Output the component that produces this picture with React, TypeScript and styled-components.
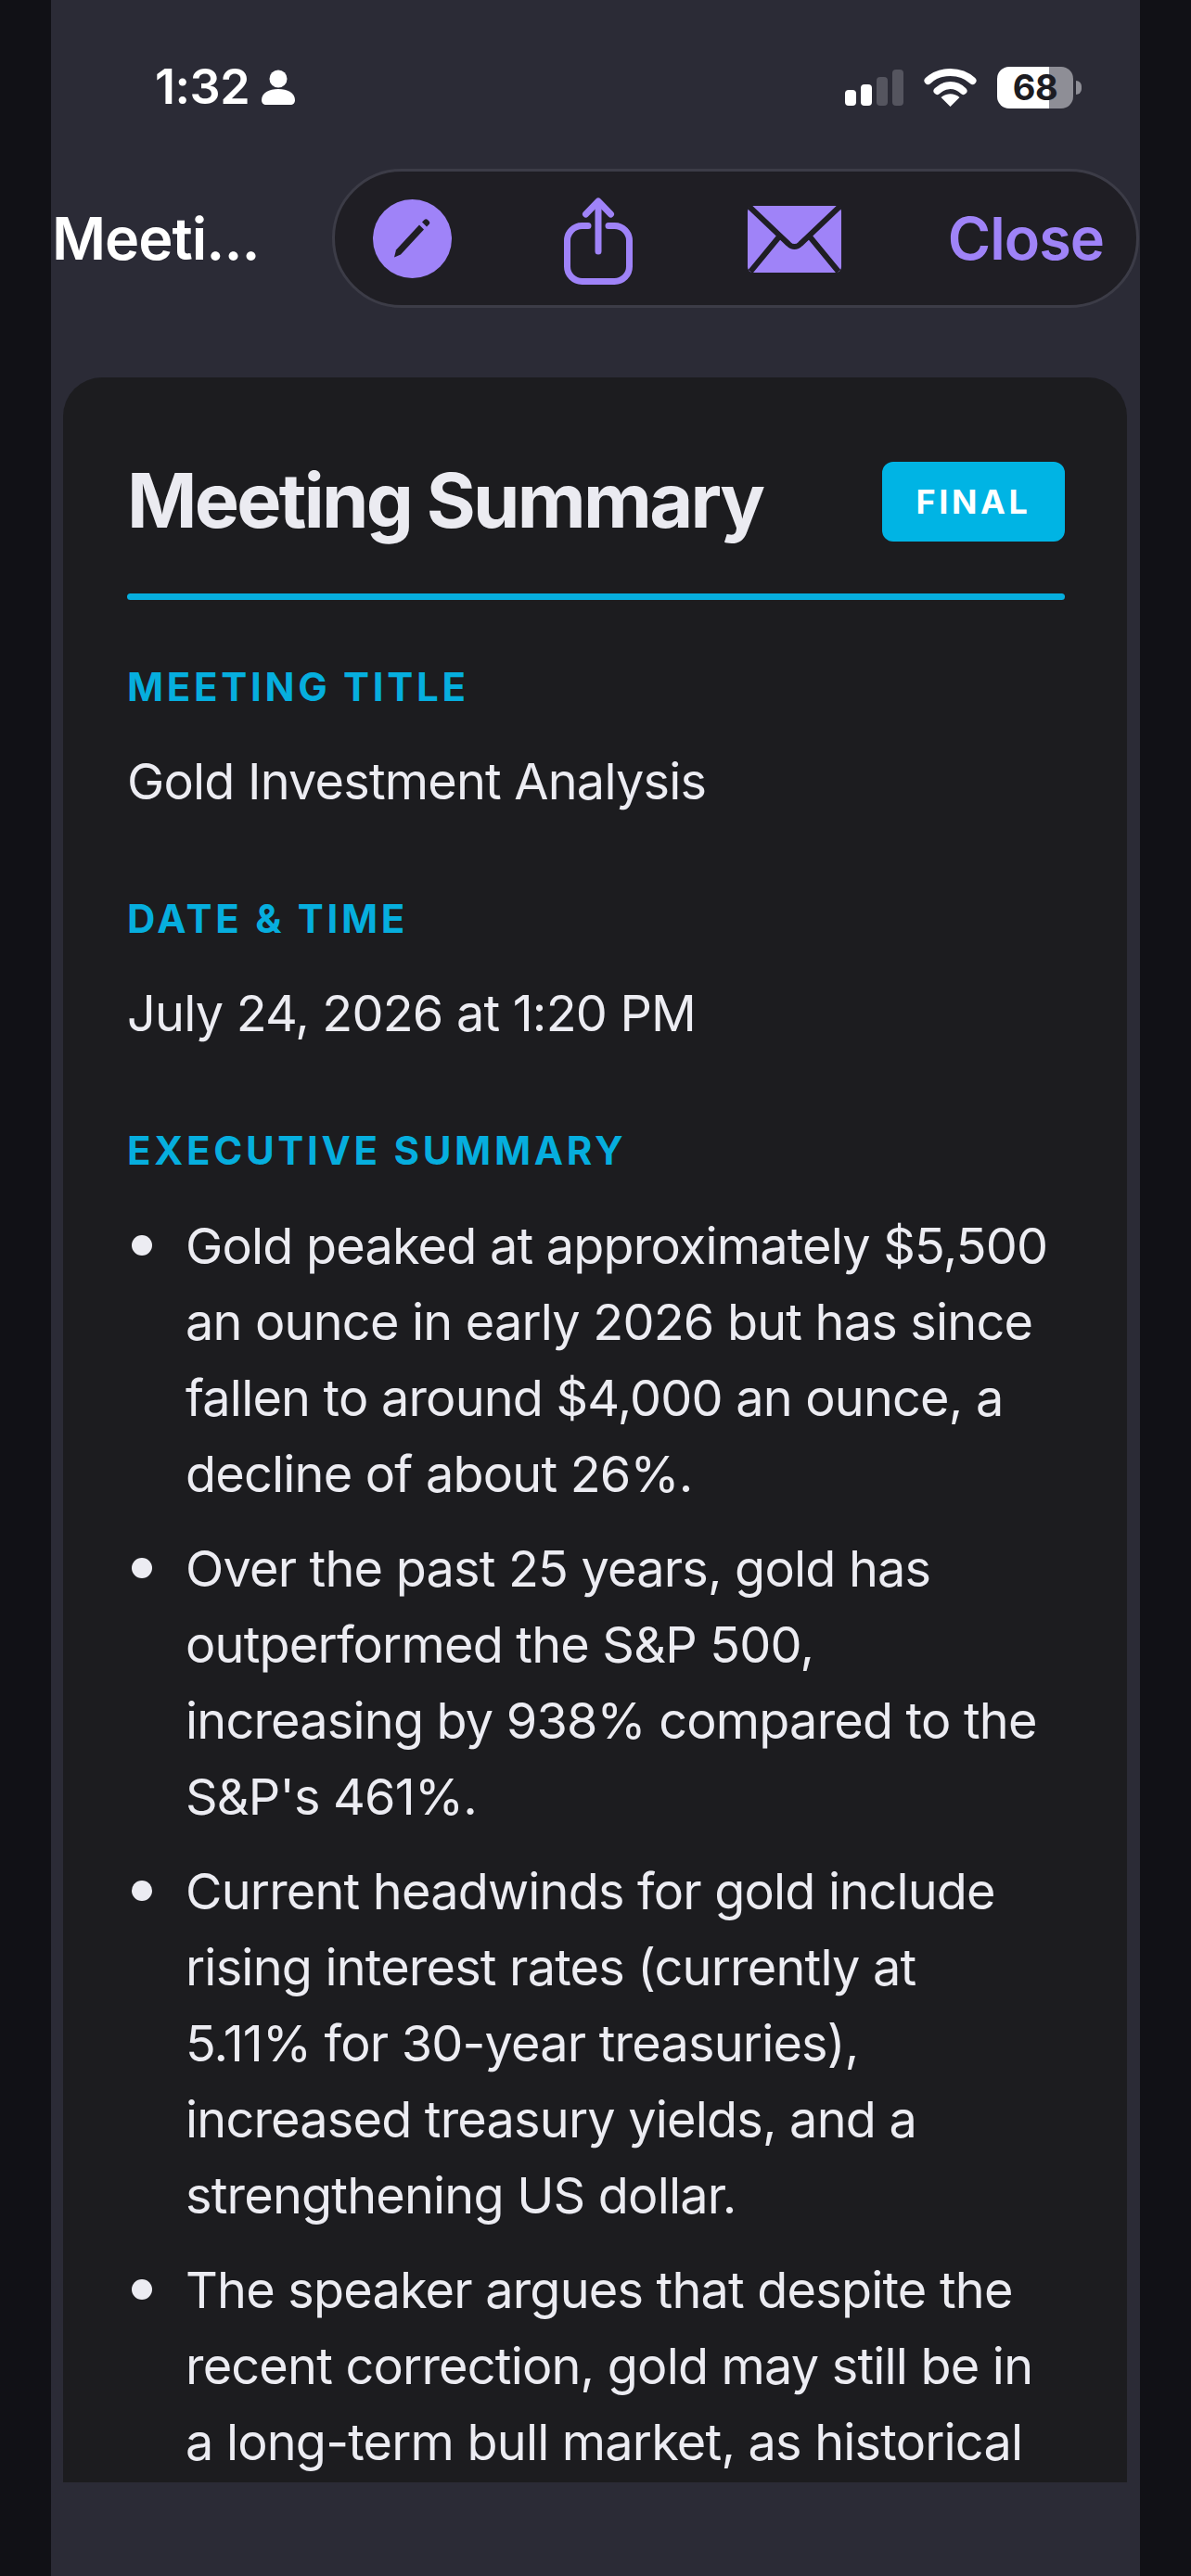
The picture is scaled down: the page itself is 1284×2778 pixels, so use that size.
import React from "react";
import styled, { createGlobalStyle } from "styled-components";

const GlobalStyle = createGlobalStyle`
  html, body {
    margin: 0;
    padding: 0;
    background: #111116;
    font-family: "Inter", "Liberation Sans", sans-serif;
  }
  * {
    box-sizing: border-box;
  }
`;

const purple = "#9f83f8";
const cyan = "#06aede";

const bullets = [
  "Gold peaked at approximately $5,500 an ounce in early 2026 but has since fallen to around $4,000 an ounce, a decline of about 26%.",
  "Over the past 25 years, gold has outperformed the S&P 500, increasing by 938% compared to the S&P's 461%.",
  "Current headwinds for gold include rising interest rates (currently at 5.11% for 30-year treasuries), increased treasury yields, and a strengthening US dollar.",
  "The speaker argues that despite the recent correction, gold may still be in a long-term bull market, as historical",
];

function App() {
  return (
    <>
      <GlobalStyle />
      <Page>
        <Phone>
          <StatusBar>
            <StatusLeft>
              <Time>1:32</Time>
              <svg width="36" height="38" viewBox="0 0 36 38" fill="#fff">
                <circle cx="18" cy="10" r="9.5" />
                <path d="M0 33c0-8 8-12 18-12s18 4 18 12c0 3-2 5-5 5H5c-3 0-5-2-5-5z" />
              </svg>
            </StatusLeft>
            <StatusRight>
              <Signal>
                <SignalBar $height={17} $on />
                <SignalBar $height={23} $on />
                <SignalBar $height={31} />
                <SignalBar $height={39} />
              </Signal>
              <svg width="57" height="42" viewBox="0 0 56 42">
                <path d="M4 14C17 2 39 2 52 14" fill="none" stroke="#fff" strokeWidth="8" strokeLinecap="round" />
                <path d="M14 25C22 17 34 17 42 25" fill="none" stroke="#fff" strokeWidth="8" strokeLinecap="round" />
                <path d="M28 42L18 32C24 27 32 27 38 32Z" fill="#fff" />
              </svg>
              <Battery>
                <span>68</span>
              </Battery>
            </StatusRight>
          </StatusBar>

          <Header>
            <HeaderTitle>Meeti...</HeaderTitle>
            <Toolbar>
              <PencilIcon width="85" height="85" viewBox="0 0 85 85">
                <circle cx="42.5" cy="42.5" r="42.5" fill={purple} />
                <path d="M23 62.500l2-8 25-27 5 5-25 27z" fill="#1f1e24" />
                <path d="M53 24.500l2.500-2.500c1-1 2.500-1 3.500 0l1.500 1.500c1 1 1 2.500 0 3.500l-2.500 2.500z" fill="#1f1e24" />
              </PencilIcon>
              <ShareIcon width="74" height="94" viewBox="0 0 74 94" fill="none" stroke={purple} strokeWidth="7" strokeLinecap="round" strokeLinejoin="round">
                <path d="M26 30.500H19.500a16 16 0 0 0-16 16v28a16 16 0 0 0 16 16h35a16 16 0 0 0 16-16v-28a16 16 0 0 0-16-16H48" />
                <path d="M37 58V5" />
                <path d="M23.500 18L37 4L50.500 18" />
              </ShareIcon>
              <MailIcon width="101" height="72" viewBox="0 0 101 72">
                <rect width="101" height="72" rx="6" fill={purple} />
                <path d="M2 1L44 41c4 4 9 4 13 0L99 1" fill="none" stroke="#1f1e24" strokeWidth="6" />
                <path d="M35 32L3 71M66 32L98 71" fill="none" stroke="#1f1e24" strokeWidth="6" />
              </MailIcon>
              <CloseLabel>Close</CloseLabel>
            </Toolbar>
          </Header>

          <Card>
            <CardHead>
              <CardTitle>Meeting Summary</CardTitle>
              <Badge>FINAL</Badge>
            </CardHead>
            <Divider />

            <Section>
              <Label>MEETING TITLE</Label>
              <Value>Gold Investment Analysis</Value>
            </Section>
            <Section>
              <Label>DATE &amp; TIME</Label>
              <Value>July 24, 2026 at 1:20 PM</Value>
            </Section>
            <Section>
              <Label>EXECUTIVE SUMMARY</Label>
              <BulletList>
                {bullets.map((text, index) => (
                  <li key={index}>{text}</li>
                ))}
              </BulletList>
            </Section>
          </Card>
        </Phone>
      </Page>
    </>
  );
}

const Page = styled.div`
  width: 1284px;
  height: 2778px;
  overflow: hidden;
  padding: 0 55px;
  background: #111116;
`;

const Phone = styled.div`
  width: 1174px;
  height: 2778px;
  background: #2b2b36;
  overflow: hidden;
`;

const StatusBar = styled.div`
  display: flex;
  align-items: center;
  justify-content: space-between;
  height: 182px;
  padding: 6px 63px 0 112px;
`;

const StatusLeft = styled.div`
  display: flex;
  align-items: center;
  gap: 13px;
`;

const Time = styled.span`
  font-size: 52px;
  line-height: 52px;
  font-weight: 600;
  color: #fff;
  letter-spacing: -0.5px;
`;

const StatusRight = styled.div`
  display: flex;
  align-items: center;
  gap: 22px;
`;

const Signal = styled.div`
  display: flex;
  align-items: flex-end;
  gap: 5px;
  height: 40px;
`;

const SignalBar = styled.i<{ $height: number; $on?: boolean }>`
  display: block;
  width: 12px;
  height: ${(p) => p.$height}px;
  border-radius: 4px;
  background: ${(p) => (p.$on ? "#fff" : "#55555f")};
`;

const Battery = styled.div`
  position: relative;
  display: flex;
  align-items: center;
  justify-content: center;
  width: 82px;
  height: 45px;
  margin-right: 9px;
  border-radius: 13px;
  background: linear-gradient(90deg, #fff 68%, #8e8e96 68%);
  color: #1c1c22;
  font-size: 38px;
  font-weight: 700;
  letter-spacing: -0.5px;

  &::after {
    content: "";
    position: absolute;
    left: 85px;
    top: 15px;
    width: 6px;
    height: 15px;
    border-radius: 0 8px 8px 0;
    background: #8e8e96;
  }
`;

const Header = styled.div`
  display: flex;
  align-items: center;
  justify-content: space-between;
  padding: 0 1px 0 1px;
`;

const HeaderTitle = styled.div`
  font-size: 63px;
  font-weight: 600;
  color: #fff;
  letter-spacing: -1px;
`;

const Toolbar = styled.div`
  display: flex;
  align-items: center;
  width: 870px;
  height: 150px;
  padding: 0 35px 0 41px;
  background: #1f1e24;
  border: 3px solid #3c3c47;
  border-radius: 75px;
`;

const PencilIcon = styled.svg`
  flex-shrink: 0;
`;

const ShareIcon = styled.svg`
  flex-shrink: 0;
  margin: 6px 0 0 121px;
`;

const MailIcon = styled.svg`
  flex-shrink: 0;
  margin: 2px 0 0 124px;
`;

const CloseLabel = styled.span`
  margin-left: auto;
  font-size: 63px;
  font-weight: 600;
  color: ${purple};
  letter-spacing: -1px;
`;

const Card = styled.div`
  height: 2270px;
  margin: 75px 14px 0 13px;
  padding: 90px 67px 0 69px;
  overflow: hidden;
  background: #1c1c1f;
  border-radius: 42px 42px 0 0;
`;

const CardHead = styled.div`
  display: flex;
  align-items: center;
  justify-content: space-between;
  height: 86px;
`;

const CardTitle = styled.h1`
  margin: 0;
  font-size: 81px;
  line-height: 86px;
  font-weight: 700;
  color: #ebebf1;
  letter-spacing: -2.7px;
`;

const Badge = styled.span`
  display: flex;
  align-items: center;
  justify-content: center;
  width: 197px;
  height: 86px;
  margin-top: 2px;
  border-radius: 12px;
  background: #00b4e4;
  color: #fff;
  font-size: 36px;
  font-weight: 700;
  letter-spacing: 3.6px;
`;

const Divider = styled.div`
  height: 7px;
  margin: 57px 0 0;
  border-radius: 4px;
  background: #06aede;
`;

const Section = styled.section`
  margin-top: 70px;

  & + & {
    margin-top: 84px;
  }
`;

const Label = styled.div`
  font-size: 42px;
  line-height: 48px;
  font-weight: 700;
  letter-spacing: 3.7px;
  color: ${cyan};
`;

const Value = styled.div`
  margin-top: 37px;
  font-size: 54px;
  line-height: 81px;
  letter-spacing: -0.8px;
  color: #ececf2;
`;

const BulletList = styled.ul`
  margin: 38px 0 0;
  padding: 0 17px 0 63px;
  list-style: none;
  font-size: 54px;
  line-height: 82px;
  letter-spacing: -0.8px;
  color: #ececf2;

  li {
    position: relative;
    margin-bottom: 20px;

    &::before {
      content: "";
      position: absolute;
      left: -58px;
      top: 29px;
      width: 22px;
      height: 22px;
      border-radius: 50%;
      background: #ececf2;
    }
  }
`;

export default App;
